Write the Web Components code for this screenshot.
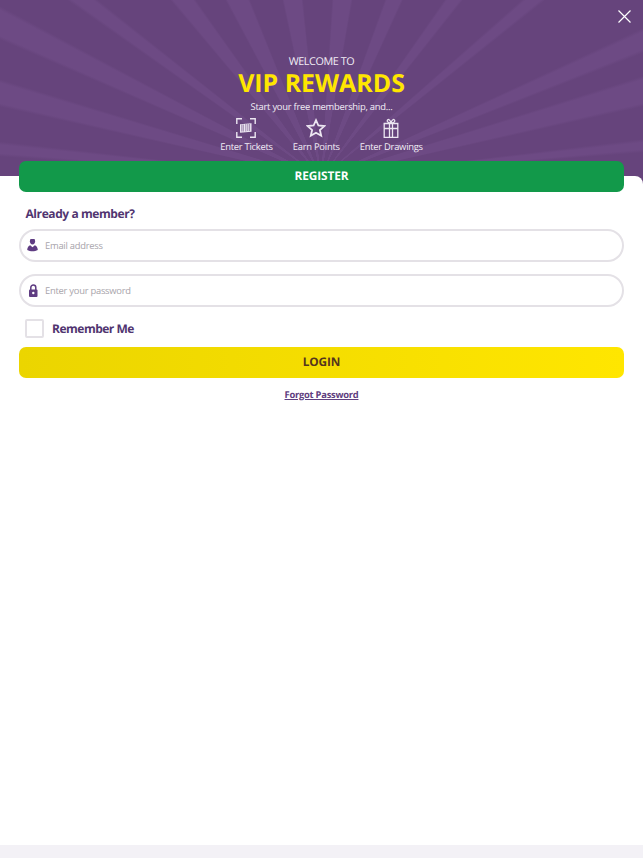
<!DOCTYPE html>
<html>
<head>
<meta charset="utf-8">
<title>VIP Rewards</title>
<style>
  html, body { margin: 0; padding: 0; height: 100%; }
  body { font-family: "Open Sans", "Liberation Sans", sans-serif; background: #fff; text-rendering: geometricPrecision; }
</style>
</head>
<body>
<rewards-page>
  <rewards-hero slot="hero"></rewards-hero>
  <login-form slot="form"></login-form>
</rewards-page>

<script>
// Page shell: hero on top, the form sheet, and the grey strip at the bottom
class RewardsPage extends HTMLElement {
  constructor() {
    super();
    this.attachShadow({ mode: 'open' });
    this.shadowRoot.innerHTML = `
      <style>
        :host { display: flex; flex-direction: column; height: 858px; background: #fff; overflow: hidden; }
        main { flex: 1; }
        footer { height: 13px; background: #f3f1f6; }
      </style>
      <main>
        <slot name="hero"></slot>
        <slot name="form"></slot>
      </main>
      <footer></footer>`;
  }
}

// One icon + caption in the hero row
class PerkItem extends HTMLElement {
  constructor() {
    super();
    this.attachShadow({ mode: 'open' });
    this.shadowRoot.innerHTML = `
      <style>
        :host { display: flex; flex-direction: column; align-items: center; }
        .icon { height: 20px; display: flex; align-items: center; justify-content: center; }
        span { font-size: 9.400px; letter-spacing: -.25px; line-height: 14px; margin-top: 2px; color: #f2eef6; white-space: nowrap; }
      </style>
      <div class="icon"><slot></slot></div>
      <span>${this.getAttribute('label')}</span>`;
  }
}

class RewardsHero extends HTMLElement {
  constructor() {
    super();
    this.attachShadow({ mode: 'open' });
    const d = '#66447c', l = '#6d4a84';
    // ray edges in degrees, read off the reference
    const rays = [[3.8,9.8],[20,24.5],[35,38.3],[48.7,51.3],[65.3,68.5],[72.7,77.2],[83.4,85.2],[274.1,276.2],[282.8,286.8],[293.6,297.9],[305.3,308.3],[320,324.6],[332,338],[348,354]];
    const stops = rays.map(r => `${d} ${r[0] - .3}deg, ${l} ${r[0] + .3}deg, ${l} ${r[1] - .3}deg, ${d} ${r[1] + .3}deg`).join(', ');
    this.shadowRoot.innerHTML = `
      <style>
        :host {
          display: block; height: 184px; box-sizing: border-box; position: relative;
          padding-top: 55px; text-align: center; color: #f2eef6;
          background: conic-gradient(from 0deg at 321px 178px, ${stops}, ${d} 360deg);
        }
        .close { position: absolute; top: 10px; right: 12px; width: 13px; height: 13px; }
        .welcome { font-size: 10.800px; letter-spacing: -.4px; line-height: 14px; }
        h1 { margin: 0; font-size: 24.900px; line-height: 28px; font-weight: 700; color: #ffe600; }
        .start { font-size: 9.400px; letter-spacing: -.25px; line-height: 14px; margin-top: 3px; }
        .perks { display: flex; justify-content: center; gap: 20px; margin-top: 4px; }
      </style>
      <svg class="close" viewBox="0 0 13 13" fill="none" stroke="#fff" stroke-width="1.2"><path d="M.5.5l12 12M12.500.5l-12 12"/></svg>
      <div class="welcome">WELCOME TO</div>
      <h1>VIP REWARDS</h1>
      <div class="start">Start your free membership, and...</div>
      <div class="perks">
        <perk-item label="Enter Tickets">
          <svg width="20" height="20" viewBox="0 0 20 20" fill="none" stroke="#ece6f1" stroke-width="1.400">
            <path d="M.8 6V.8h5.200M14 .8h5.200V6M19.200 14v5.200H14M6 19.200H.8V14"/>
            <path d="M4 6.300l11.500-1v8.400l-11.500 1z" fill="#ece6f1" stroke="none"/>
            <path d="M5.800 6.500v7M7.300 6.500v7M9.800 6v7.500M11.800 6v7M13.600 6v7" stroke="#66447c" stroke-width=".6"/>
          </svg>
        </perk-item>
        <perk-item label="Earn Points">
          <svg width="20" height="20" viewBox="0 0 20 20" fill="none" stroke="#ece6f1" stroke-width="1.800" stroke-linejoin="miter">
            <path d="M10 2.200l2.400 5.300 5.900.6-4.400 3.900 1.300 5.700-5.200-3-5.200 3 1.300-5.700-4.400-3.900 5.900-.6z"/>
          </svg>
        </perk-item>
        <perk-item label="Enter Drawings">
          <svg width="16" height="20" viewBox="0 0 16 20" fill="none" stroke="#ece6f1" stroke-width="1.300">
            <path d="M1.200 5.500h13.600v13.800H1.200zM1.200 10.500h13.600M6.500 5.500v13.800M9.500 5.500v13.800"/>
            <path d="M8 5C5.500 5 3.800 3.800 4.300 2.300 4.900.7 7.300 1.500 8 5c.7-3.500 3.100-4.300 3.700-2.700C12.200 3.800 10.500 5 8 5z"/>
          </svg>
        </perk-item>
      </div>`;
  }
}

// Big rounded action button, colours come from custom properties
class ActionButton extends HTMLElement {
  constructor() {
    super();
    this.attachShadow({ mode: 'open' });
    this.shadowRoot.innerHTML = `
      <style>
        :host { display: block; }
        button {
          display: block; width: 100%; height: 31.500px; border: 0; border-radius: 7px; padding: 0;
          font: 700 11.800px/31.500px "Open Sans", sans-serif; letter-spacing: -.1px; text-rendering: geometricPrecision;
          color: var(--btn-color, #fff); background: var(--btn-bg, #12994a);
        }
      </style>
      <button><slot></slot></button>`;
  }
}

// Pill shaped input with an icon on the left
class PillInput extends HTMLElement {
  constructor() {
    super();
    this.attachShadow({ mode: 'open' });
    this.shadowRoot.innerHTML = `
      <style>
        :host { display: block; }
        label {
          display: flex; align-items: center; height: 29px;
          border: 2px solid #e4e1e6; border-radius: 17px; background: #fff;
        }
        .icon { width: 12px; height: 13px; margin-left: 5.500px; display: flex; justify-content: center; }
        input {
          flex: 1; border: 0; outline: 0; padding: 0; margin-left: 6.500px; background: transparent;
          font: 400 9.400px "Open Sans", sans-serif; letter-spacing: -.25px; text-rendering: geometricPrecision; color: #4f2d6e;
        }
        input::placeholder { color: #a8a4ab; opacity: 1; }
      </style>
      <label>
        <span class="icon"><slot></slot></span>
        <input type="${this.getAttribute('type') || 'text'}" placeholder="${this.getAttribute('placeholder')}">
      </label>`;
  }
}

class LoginForm extends HTMLElement {
  constructor() {
    super();
    this.attachShadow({ mode: 'open' });
    this.shadowRoot.innerHTML = `
      <style>
        :host { display: flow-root; position: relative; margin-top: -8px; padding: 0 19px; color: #513570; background: #fff; border-top-right-radius: 8px; }
        .register { margin-top: -15.500px; position: relative; }
        h2 { margin: 13px 0 5.500px 6.500px; font-size: 12px; letter-spacing: -.42px; line-height: 18px; font-weight: 700; }
        pill-input + pill-input { margin-top: 12px; }
        .remember { display: flex; align-items: center; height: 19px; margin: 12px 0 9px 6px; gap: 8px; font-size: 12px; letter-spacing: -.5px; font-weight: 700; }
        .box { flex: none; width: 15px; height: 15px; border: 2px solid #e4e1e6; border-radius: 2px; }
        .login { --btn-bg: linear-gradient(90deg, #ebd500, #ffe600); --btn-color: #54351e; }
        a { display: block; margin-top: 10px; text-align: center; font-size: 9.400px; letter-spacing: -.25px; line-height: 14px; font-weight: 700; color: #5f4080; text-decoration: underline; }
      </style>
      <action-button class="register">REGISTER</action-button>
      <h2>Already a member?</h2>
      <pill-input placeholder="Email address" type="email">
        <svg width="11" height="13" viewBox="0 1.500 11 13" fill="#5f3c82"><ellipse cx="5.500" cy="3.800" rx="2.600" ry="3.100"/><path d="M.2 12.500c0-2.800 1.600-4.400 3-4.800l2.300 2 2.300-2c1.400.4 3 2 3 4.800-1.500 1-3.500 1.200-5.300 1.200S1.700 13.500.2 12.500z"/></svg>
      </pill-input>
      <pill-input placeholder="Enter your password" type="password">
        <svg width="10" height="13" viewBox="0 0 10 13"><path d="M2.800 6V3.500a2.500 2.500 0 0 1 5 0V6" fill="none" stroke="#5f3c82" stroke-width="1.500"/><rect x="1" y="5.500" width="8.500" height="7.500" rx="1" fill="#5f3c82"/><circle cx="5.300" cy="9" r="1.200" fill="#fff"/></svg>
      </pill-input>
      <div class="remember"><span class="box"></span>Remember Me</div>
      <action-button class="login">LOGIN</action-button>
      <a href="#">Forgot Password</a>`;
  }
}

customElements.define('rewards-page', RewardsPage);
customElements.define('perk-item', PerkItem);
customElements.define('rewards-hero', RewardsHero);
customElements.define('action-button', ActionButton);
customElements.define('pill-input', PillInput);
customElements.define('login-form', LoginForm);
</script>
</body>
</html>
